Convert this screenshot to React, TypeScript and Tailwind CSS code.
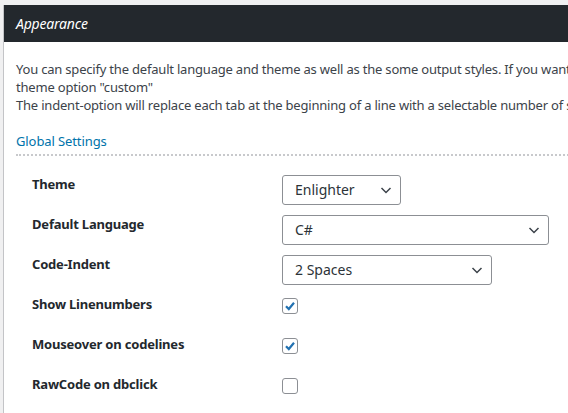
import React from "react";

function Chevron() {
  return (
    <svg width="12" height="12" viewBox="0 0 12 12" className="shrink-0">
      <path d="M1.5 4 L6 8.5 L10.5 4" fill="none" stroke="#3c434a" strokeWidth="1.5" />
    </svg>
  );
}

function Select({ value, width }: { value: string; width: string }) {
  return (
    <div className={`flex h-[30px] items-center justify-between rounded-[3px] border border-[#8c8f94] bg-white pl-[12px] pr-[8px] text-[14px] text-[#2c3338] ${width}`}>
      <span>{value}</span>
      <Chevron />
    </div>
  );
}

function Checkbox({ checked }: { checked: boolean }) {
  return (
    <div className="flex h-4 w-4 items-center justify-center rounded-[3px] border border-[#8c8f94] bg-white">
      {checked && (
        <svg width="14" height="14" viewBox="0 0 14 14">
          <path d="M3 7.2 L5.8 10 L11 3.8" fill="none" stroke="#2271b1" strokeWidth="2.2" />
        </svg>
      )}
    </div>
  );
}

type Row = { label: string; control: React.ReactNode; box?: boolean };

const rows: Row[] = [
  { label: "Theme", control: <Select value="Enlighter" width="w-[119px]" /> },
  { label: "Default Language", control: <Select value="C#" width="w-[267px]" /> },
  { label: "Code-Indent", control: <Select value="2 Spaces" width="w-[210px]" /> },
  { label: "Show Linenumbers", control: <Checkbox checked />, box: true },
  { label: "Mouseover on codelines", control: <Checkbox checked />, box: true },
  { label: "RawCode on dbclick", control: <Checkbox checked={false} />, box: true },
];

export default function App() {
  return (
    <div className="h-[413px] w-[568px] overflow-hidden bg-[#f0f0f1] pl-[3px] pt-[5px] font-['Segoe_UI','Noto_Sans',sans-serif] text-[13px] text-[#3c434a]">
      <div className="h-full w-[700px] border-l border-[#c3c4c7] bg-white">
        <div className="flex h-[37px] items-center bg-[#23282d] pl-[12px] text-[14px] italic tracking-[-0.2px] text-white">
          Appearance
        </div>
        <div className="whitespace-nowrap px-[12px] pt-[18px] leading-[18px] tracking-[-0.2px]">
          <p>You can specify the default language and theme as well as the some output styles. If you want to use your own styles, select the</p>
          <p>theme option "custom"</p>
          <p>The indent-option will replace each tab at the beginning of a line with a selectable number of spaces.</p>
        </div>
        <div className="mx-[12px] mt-[18px] w-[560px] border-b-2 border-dotted border-[#c8c9cc] pb-[2px] text-[13px] tracking-[-0.1px] text-[#0073aa]">
          Global Settings
        </div>
        <div className="mt-[19px] flex flex-col pl-[28px]">
          {rows.map((r) => (
            <div key={r.label} className="flex h-[40px] items-start">
              <div className="w-[250px] text-[13px] font-bold leading-[18px] tracking-[-0.2px] text-[#23282d]">{r.label}</div>
              <div className={r.box ? "pt-[3px]" : ""}>{r.control}</div>
            </div>
          ))}
        </div>
      </div>
    </div>
  );
}
